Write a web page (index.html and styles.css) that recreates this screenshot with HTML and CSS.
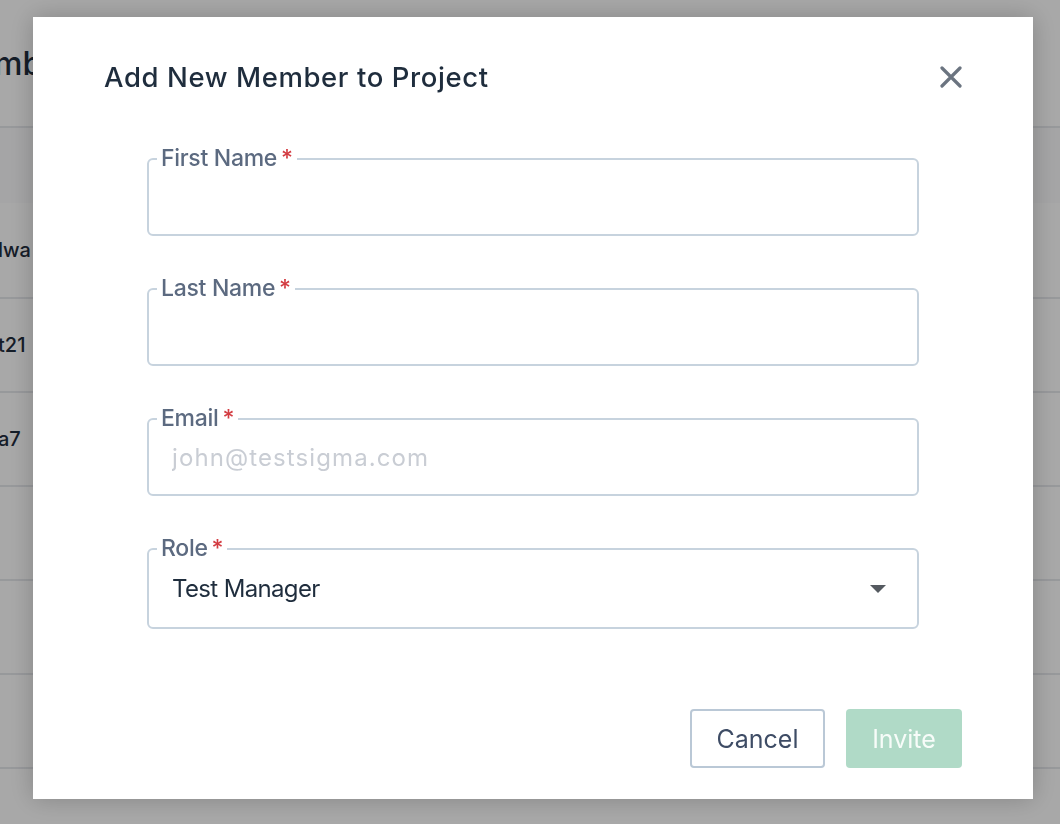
FILE: index.html
```html
<!DOCTYPE html>
<html lang="en">
<head>
<meta charset="utf-8">
<title>Add New Member to Project</title>
<link rel="stylesheet" href="styles.css">
</head>
<body>
<div class="page">
  <div class="page-head"><h1 class="page-title">mb</h1></div>
  <div class="table">
    <div class="row row-head"></div>
    <div class="row"><span class="cell">lwa</span></div>
    <div class="row"><span class="cell">t21</span></div>
    <div class="row"><span class="cell">a7</span></div>
    <div class="row"></div>
    <div class="row"></div>
    <div class="row"></div>
    <div class="row"></div>
  </div>
</div>

<div class="overlay">
  <div class="dialog" role="dialog" aria-labelledby="dlg-title">
    <div class="dialog-head">
      <h2 id="dlg-title" class="dialog-title">Add New Member to Project</h2>
      <button class="close" aria-label="Close">
        <svg width="22" height="22" viewBox="0 0 22 22"><path d="M2 2 L20 20 M20 2 L2 20" stroke="#6b7480" stroke-width="3.2" stroke-linecap="round" fill="none"/></svg>
      </button>
    </div>

    <form class="form">
      <div class="field">
        <label class="label" for="fn">First Name<span class="req">*</span></label>
        <input id="fn" class="input" type="text">
      </div>
      <div class="field">
        <label class="label" for="ln">Last Name<span class="req">*</span></label>
        <input id="ln" class="input" type="text">
      </div>
      <div class="field">
        <label class="label" for="em">Email<span class="req">*</span></label>
        <input id="em" class="input" type="text" placeholder="john@testsigma.com">
      </div>
      <div class="field field-select">
        <label class="label" for="role">Role<span class="req">*</span></label>
        <div class="select" id="role">
          <span class="select-value">Test Manager</span>
          <span class="caret"></span>
        </div>
      </div>
    </form>

    <div class="dialog-foot">
      <button class="btn btn-cancel" type="button">Cancel</button>
      <button class="btn btn-invite" type="button">Invite</button>
    </div>
  </div>
</div>
</body>
</html>
```

FILE: styles.css
```css
* { box-sizing: border-box; }
html, body { margin: 0; padding: 0; }
body {
  width: 1060px;
  height: 824px;
  overflow: hidden;
  background: #ffffff;
  font-family: Inter, "Liberation Sans", sans-serif;
  color: #1f2d3d;
}

/* background page */
.page { width: 1060px; }
.page-head { height: 126px; padding-top: 44px; }
.page-title {
  margin: 0 0 0 -6px;
  font-size: 32px;
  line-height: 40px;
  font-weight: 500;
  color: #1f2d3d;
}
.table { border-top: 2px solid #e6e8ec; }
.row {
  height: 94px;
  border-bottom: 2px solid #e6e8ec;
  display: flex;
  align-items: center;
}
.row-head { height: 75px; background: #fbfbfc; border-bottom: none; }
.row:nth-child(2) { height: 96px; }
.cell { font-size: 20px; font-weight: 500; margin-left: -2px; color: #1f2d3d; }

/* overlay */
.overlay {
  position: fixed;
  inset: 0;
  background: rgba(0, 0, 0, 0.34);
  padding: 17px 0 0 33px;
}
.dialog {
  width: 1000px;
  height: 782px;
  background: #ffffff;
  box-shadow: 0 0 24px rgba(0, 0, 0, 0.22);
  display: flex;
  flex-direction: column;
}
.dialog-head {
  display: flex;
  align-items: center;
  justify-content: space-between;
  padding: 44px 71px 0 71px;
  height: 76px;
}
.dialog-title {
  margin: 0;
  font-size: 27.5px;
  line-height: 32px;
  font-weight: 500;
  color: #1f2d3d;
  letter-spacing: 0.6px;
}
.close {
  border: 0;
  background: none;
  padding: 0;
  width: 22px;
  height: 22px;
  display: flex;
}

.form {
  padding: 65px 114px 0 114px;
  display: flex;
  flex-direction: column;
  gap: 52px;
}
.field {
  position: relative;
  height: 78px;
  border: 2px solid #c7d3de;
  border-radius: 6px;
}
.field-select { height: 81px; }
.label {
  position: absolute;
  top: -14px;
  left: 8px;
  padding: 0 4px;
  background: #ffffff;
  font-size: 23px;
  line-height: 24px;
  font-weight: 500;
  letter-spacing: -0.3px;
  color: #5c6a80;
}
.req { color: #d33c42; margin-left: 4px; }
.input {
  width: 100%;
  height: 100%;
  border: 0;
  outline: none;
  background: transparent;
  padding: 0 23px;
  font-family: inherit;
  font-size: 24px;
  color: #1f2d3d;
}
.input::placeholder { color: #c9cdd4; letter-spacing: 1.1px; }
.select {
  height: 100%;
  display: flex;
  align-items: center;
  justify-content: space-between;
  padding: 0 31px 0 23px;
}
.select-value { font-size: 24px; color: #1f2d3d; letter-spacing: -0.65px; }
.caret {
  width: 0;
  height: 0;
  border-left: 8px solid transparent;
  border-right: 8px solid transparent;
  border-top: 8px solid #555a60;
}

.dialog-foot {
  margin-top: auto;
  padding: 0 71px 31px 0;
  display: flex;
  justify-content: flex-end;
  gap: 21px;
}
.btn {
  height: 59px;
  border-radius: 4px;
  font-family: inherit;
  font-size: 25px;
  padding: 0;
}
.btn-cancel {
  width: 135px;
  background: #ffffff;
  border: 2px solid #bac8d6;
  color: #3e4c65;
}
.btn-invite {
  width: 116px;
  background: #b0dac7;
  border: 0;
  color: #f7fcf9;
}
```
